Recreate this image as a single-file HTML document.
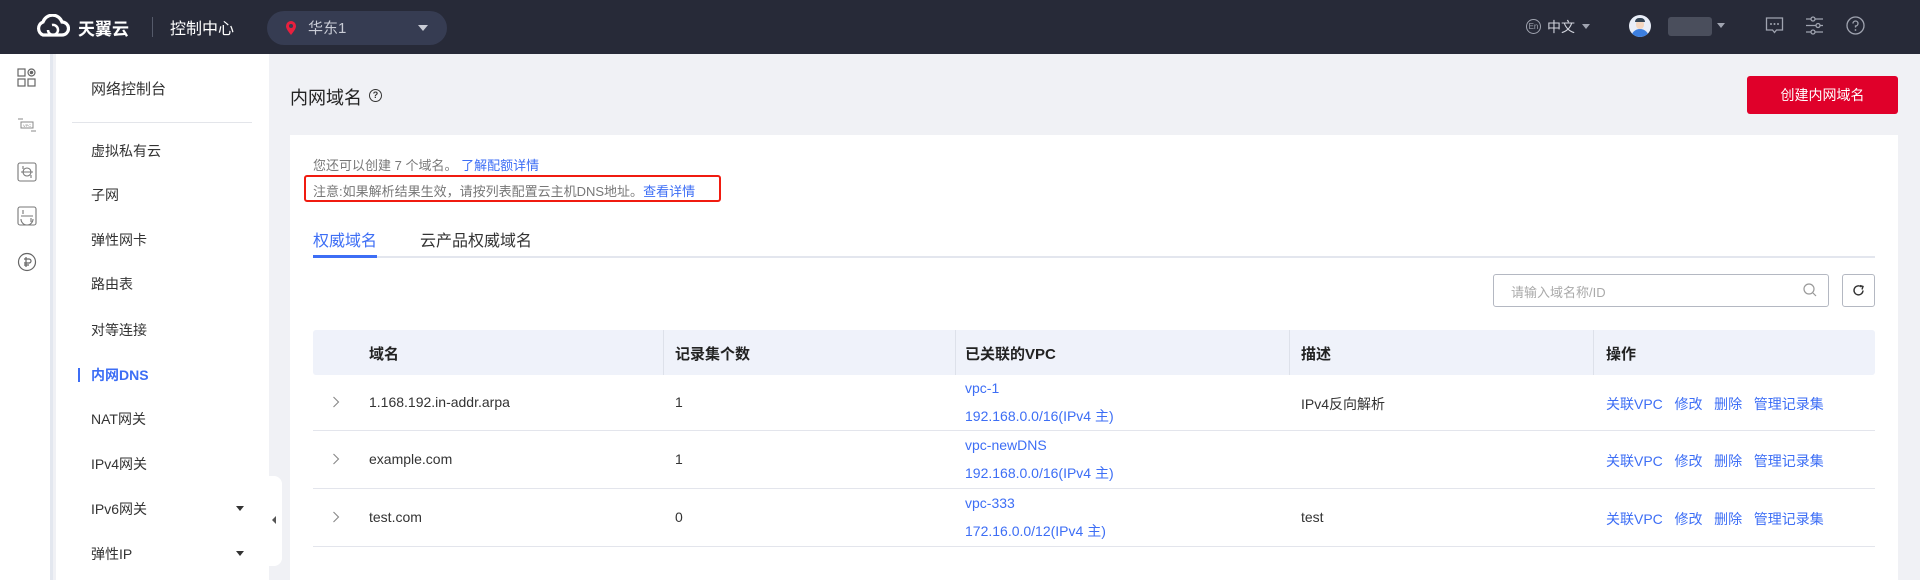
<!DOCTYPE html>
<html><head><meta charset="utf-8"><style>
*{margin:0;padding:0;box-sizing:border-box}
body{width:1920px;height:580px;overflow:hidden;background:#f0f1f5;font-family:"Liberation Sans","Noto Sans CJK SC",sans-serif;font-size:14px;color:#333;position:relative}
.a{position:absolute;white-space:nowrap}
.hdr{left:0;top:0;width:1920px;height:54px;background:#272a38}
.link{color:#3d6ef5}
.th{font-weight:bold;font-size:15px;color:#222}
</style></head><body>
<div class="a hdr"></div>
<svg class="a" style="left:34px;top:14px" width="36" height="24" viewBox="0 0 36 24"><path d="M9 21 A7 7 0 0 1 9 8 A10 10 0 0 1 28 8 A6.5 6.5 0 0 1 28 21 Z" fill="none" stroke="#fff" stroke-width="3.2"/><path d="M14 16 a5 5 0 1 0 4 -5" fill="none" stroke="#fff" stroke-width="2.5"/></svg>
<div class="a" style="left:78px;top:15px;color:#fff;font-size:17px;font-weight:bold">天翼云</div>
<div class="a" style="left:152px;top:17px;width:1px;height:20px;background:#555a6a"></div>
<div class="a" style="left:170px;top:15px;color:#fff;font-size:16px">控制中心</div>
<div class="a" style="left:267px;top:11px;width:180px;height:34px;border-radius:17px;background:#363c52"></div>
<svg class="a" style="left:285px;top:20px" width="12" height="16" viewBox="0 0 12 16"><path d="M6 15 C2 10 1 8 1 6 A5 5 0 0 1 11 6 C11 8 10 10 6 15Z" fill="#e8203e"/><circle cx="6" cy="6" r="2" fill="#363c52"/></svg>
<div class="a" style="left:308px;top:17px;color:#c9ccd6;font-size:15px">华东1</div>
<div class="a" style="left:418px;top:25px;border:5px solid transparent;border-top:6px solid #c9ccd6"></div>
<div class="a" style="left:1526px;top:19px;width:15px;height:15px;border:1px solid #a0a4b0;border-radius:50%;color:#a0a4b0;font-size:8px;line-height:13px;text-align:center">En</div>
<div class="a" style="left:1547px;top:17px;color:#d0d3dc;font-size:14px">中文</div>
<div class="a" style="left:1582px;top:24px;border:4px solid transparent;border-top:5px solid #a0a4b0"></div>
<div class="a" style="left:1629px;top:15px;width:22px;height:22px;border-radius:50%;background:#e9eef8;overflow:hidden"><div style="position:absolute;left:2px;top:14px;width:18px;height:10px;border-radius:9px 9px 0 0;background:#3c7fe0"></div><div style="position:absolute;left:7px;top:5px;width:8px;height:9px;border-radius:4px;background:#f3d6c0"></div><div style="position:absolute;left:6px;top:3px;width:10px;height:4px;border-radius:4px 4px 0 0;background:#345"></div></div>
<div class="a" style="left:1668px;top:17px;width:44px;height:19px;background:#4a4e5c;border-radius:3px"></div>
<div class="a" style="left:1717px;top:23px;border:4px solid transparent;border-top:5px solid #a0a4b0"></div>
<svg class="a" style="left:1765px;top:16px" width="19" height="19" viewBox="0 0 19 19"><path d="M1.5 2 H17.5 V14 H11.5 L9.5 16.5 L7.5 14 H1.5 Z" fill="none" stroke="#a0a4b0" stroke-width="1.3"/><circle cx="6" cy="8" r="1" fill="#a0a4b0"/><circle cx="9.5" cy="8" r="1" fill="#a0a4b0"/><circle cx="13" cy="8" r="1" fill="#a0a4b0"/></svg>
<svg class="a" style="left:1805px;top:16px" width="19" height="19" viewBox="0 0 19 19"><g stroke="#a0a4b0" stroke-width="1.3" fill="none"><path d="M1 3H6M10 3H18M1 9.5H11M15 9.5H18M1 16H6M10 16H18"/><circle cx="8" cy="3" r="2"/><circle cx="13" cy="9.5" r="2"/><circle cx="8" cy="16" r="2"/></g></svg>
<svg class="a" style="left:1846px;top:16px" width="19" height="19" viewBox="0 0 19 19"><circle cx="9.5" cy="9.5" r="8.5" fill="none" stroke="#a0a4b0" stroke-width="1.3"/><path d="M7 7.5 A2.5 2.5 0 1 1 9.5 10 V11.5" fill="none" stroke="#a0a4b0" stroke-width="1.3"/><circle cx="9.5" cy="14" r=".9" fill="#a0a4b0"/></svg>
<div class="a" style="left:0;top:54px;width:53px;height:526px;background:#fff;border-right:3px solid #e3e7ef"></div>
<svg class="a" style="left:17px;top:68px" width="20" height="20" viewBox="0 0 20 20"><g fill="none" stroke="#666" stroke-width="1.2"><rect x="1" y="1" width="7" height="7"/><rect x="1" y="11" width="7" height="7"/><rect x="11" y="11" width="7" height="7"/><circle cx="14.5" cy="4.5" r="3.5"/><circle cx="14.5" cy="4.5" r="1.2" fill="#666"/></g></svg>
<svg class="a" style="left:17px;top:115px" width="20" height="20" viewBox="0 0 20 20"><g fill="none" stroke="#888" stroke-width="1"><rect x="4" y="7" width="12" height="6"/><path d="M1 4H6M14 16H19"/></g><text x="6" y="12" font-size="4" fill="#888" font-family="Liberation Sans">VPC</text></svg>
<svg class="a" style="left:17px;top:162px" width="20" height="20" viewBox="0 0 20 20"><g fill="none" stroke="#777" stroke-width="1.1"><rect x="1" y="1" width="18" height="18" rx="2"/><circle cx="10" cy="10" r="4"/><path d="M6 4V7M14 13V16M4 10H16"/></g></svg>
<svg class="a" style="left:17px;top:206px" width="20" height="20" viewBox="0 0 20 20"><g fill="none" stroke="#777" stroke-width="1.1"><rect x="1" y="1" width="18" height="18" rx="2"/><path d="M4 10H16M6 4V8M14 12V16M4 13A4 4 0 0 0 16 13"/></g></svg>
<svg class="a" style="left:17px;top:252px" width="20" height="20" viewBox="0 0 20 20"><g fill="none" stroke="#666" stroke-width="1.2"><circle cx="10" cy="10" r="8.5"/><path d="M7 7H12A2 2 0 0 1 12 11H7M9 5V15M7 13H12"/></g></svg>
<div class="a" style="left:56px;top:54px;width:213px;height:526px;background:#fff"></div>
<div class="a" style="left:91px;top:78px;font-size:15px;color:#333">网络控制台</div>
<div class="a" style="left:72px;top:122px;width:180px;height:1px;background:#e3e5ea"></div>
<div class="a" style="left:91px;top:141px;color:#333">虚拟私有云</div>
<div class="a" style="left:91px;top:185px;color:#333">子网</div>
<div class="a" style="left:91px;top:230px;color:#333">弹性网卡</div>
<div class="a" style="left:91px;top:274px;color:#333">路由表</div>
<div class="a" style="left:91px;top:320px;color:#333">对等连接</div>
<div class="a" style="left:78px;top:368px;width:2px;height:14px;background:#3d6ef5"></div>
<div class="a" style="left:91px;top:365px;color:#3d6ef5;font-weight:bold">内网DNS</div>
<div class="a" style="left:91px;top:409px;color:#333">NAT网关</div>
<div class="a" style="left:91px;top:454px;color:#333">IPv4网关</div>
<div class="a" style="left:91px;top:499px;color:#333">IPv6网关</div>
<div class="a" style="left:236px;top:506px;border:4px solid transparent;border-top:5px solid #333"></div>
<div class="a" style="left:91px;top:544px;color:#333">弹性IP</div>
<div class="a" style="left:236px;top:551px;border:4px solid transparent;border-top:5px solid #333"></div>
<div class="a" style="left:269px;top:476px;width:13px;height:90px;background:#fff;border-radius:0 8px 8px 0"></div>
<div class="a" style="left:272px;top:516px;border:4px solid transparent;border-right:4px solid #555;border-left:0"></div>
<div class="a" style="left:290px;top:84px;font-size:18px;color:#222">内网域名</div>
<div class="a" style="left:369px;top:89px;width:13px;height:13px;border:1.3px solid #333;border-radius:50%;font-size:9px;line-height:11px;text-align:center;font-weight:bold">?</div>
<div class="a" style="left:1747px;top:76px;width:151px;height:38px;background:#e0002a;border-radius:3px;color:#fff;text-align:center;line-height:38px;font-size:14px">创建内网域名</div>
<div class="a" style="left:290px;top:135px;width:1608px;height:445px;background:#fff"></div>
<div class="a" style="left:313px;top:155px;font-size:13px;color:#777">您还可以创建 7 个域名。 <span class="link">了解配额详情</span></div>
<div class="a" style="left:304px;top:175px;width:417px;height:27px;border:2.5px solid #f01b10;border-radius:3px"></div>
<div class="a" style="left:313px;top:181px;font-size:13px;color:#777">注意:如果解析结果生效，请按列表配置云主机DNS地址。<span class="link">查看详情</span></div>
<div class="a" style="left:313px;top:227px;font-size:16px;color:#3d6ef5">权威域名</div>
<div class="a" style="left:420px;top:227px;font-size:16px;color:#333">云产品权威域名</div>
<div class="a" style="left:313px;top:256px;width:1562px;height:2px;background:#e3e6ee"></div>
<div class="a" style="left:313px;top:255px;width:64px;height:3px;background:#3d6ef5"></div>
<div class="a" style="left:1493px;top:274px;width:336px;height:33px;border:1px solid #b4b8c2;border-radius:3px"></div>
<div class="a" style="left:1511px;top:282px;font-size:13px;color:#aaa">请输入域名称/ID</div>
<svg class="a" style="left:1803px;top:283px" width="14" height="14" viewBox="0 0 14 14"><circle cx="6" cy="6" r="5" fill="none" stroke="#999" stroke-width="1.2"/><path d="M10 10L13 13" stroke="#999" stroke-width="1.2"/></svg>
<div class="a" style="left:1842px;top:274px;width:33px;height:33px;border:1px solid #b4b8c2;border-radius:3px"></div>
<svg class="a" style="left:1852px;top:284px" width="13" height="13" viewBox="0 0 13 13"><path d="M11 6.5A4.5 4.5 0 1 1 9.5 3" fill="none" stroke="#333" stroke-width="1.4"/><path d="M8 1.5L11 2.5L10 5.5" fill="none" stroke="#333" stroke-width="1.4"/></svg>
<div class="a" style="left:313px;top:330px;width:1562px;height:45px;background:#eff2fa;border-radius:3px"></div>
<div class="a" style="left:663px;top:330px;width:1px;height:45px;background:#dde1ea"></div>
<div class="a" style="left:955px;top:330px;width:1px;height:45px;background:#dde1ea"></div>
<div class="a" style="left:1289px;top:330px;width:1px;height:45px;background:#dde1ea"></div>
<div class="a" style="left:1593px;top:330px;width:1px;height:45px;background:#dde1ea"></div>
<div class="a th" style="left:369px;top:343px">域名</div>
<div class="a th" style="left:675px;top:343px">记录集个数</div>
<div class="a th" style="left:965px;top:343px">已关联的VPC</div>
<div class="a th" style="left:1301px;top:343px">描述</div>
<div class="a th" style="left:1606px;top:343px">操作</div>
<div class="a" style="left:313px;top:430px;width:1562px;height:1px;background:#e3e5ec"></div>
<div class="a" style="left:313px;top:488px;width:1562px;height:1px;background:#e3e5ec"></div>
<div class="a" style="left:313px;top:546px;width:1562px;height:1px;background:#e3e5ec"></div>
<svg class="a" style="left:332px;top:396px" width="8" height="12" viewBox="0 0 8 12"><path d="M1.5 1L6.5 6L1.5 11" fill="none" stroke="#888" stroke-width="1.1"/></svg>
<div class="a" style="left:369px;top:394px">1.168.192.in-addr.arpa</div>
<div class="a" style="left:675px;top:394px">1</div>
<div class="a link" style="left:965px;top:380px">vpc-1</div>
<div class="a link" style="left:965px;top:406px">192.168.0.0/16(IPv4 主)</div>
<div class="a" style="left:1301px;top:394px">IPv4反向解析</div>
<div class="a link" style="left:1606px;top:394px">关联VPC&nbsp;&nbsp;&nbsp;修改&nbsp;&nbsp;&nbsp;删除&nbsp;&nbsp;&nbsp;管理记录集</div>
<svg class="a" style="left:332px;top:453px" width="8" height="12" viewBox="0 0 8 12"><path d="M1.5 1L6.5 6L1.5 11" fill="none" stroke="#888" stroke-width="1.1"/></svg>
<div class="a" style="left:369px;top:451px">example.com</div>
<div class="a" style="left:675px;top:451px">1</div>
<div class="a link" style="left:965px;top:437px">vpc-newDNS</div>
<div class="a link" style="left:965px;top:463px">192.168.0.0/16(IPv4 主)</div>
<div class="a link" style="left:1606px;top:451px">关联VPC&nbsp;&nbsp;&nbsp;修改&nbsp;&nbsp;&nbsp;删除&nbsp;&nbsp;&nbsp;管理记录集</div>
<svg class="a" style="left:332px;top:511px" width="8" height="12" viewBox="0 0 8 12"><path d="M1.5 1L6.5 6L1.5 11" fill="none" stroke="#888" stroke-width="1.1"/></svg>
<div class="a" style="left:369px;top:509px">test.com</div>
<div class="a" style="left:675px;top:509px">0</div>
<div class="a link" style="left:965px;top:495px">vpc-333</div>
<div class="a link" style="left:965px;top:521px">172.16.0.0/12(IPv4 主)</div>
<div class="a" style="left:1301px;top:509px">test</div>
<div class="a link" style="left:1606px;top:509px">关联VPC&nbsp;&nbsp;&nbsp;修改&nbsp;&nbsp;&nbsp;删除&nbsp;&nbsp;&nbsp;管理记录集</div>
</body></html>
